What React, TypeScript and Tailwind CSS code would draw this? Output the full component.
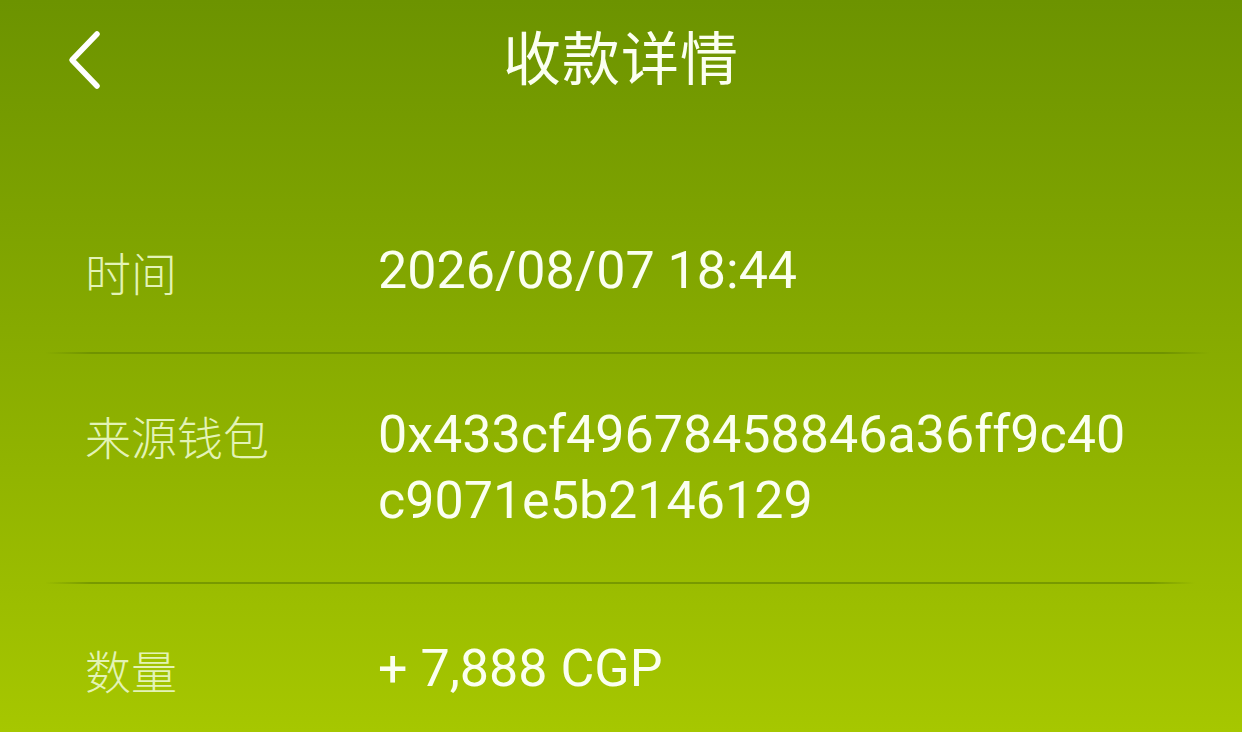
import React from "react";

const cjk = { fontFamily: '"Noto Sans CJK SC", "Noto Sans", sans-serif' };
const num = { fontFamily: 'Roboto, "Noto Sans CJK SC", sans-serif' };

function Line({ widthClass }: { widthClass: string }) {
  return (
    <div
      className={`h-[2px] ${widthClass} bg-[linear-gradient(90deg,rgba(96,130,0,0)_0%,rgba(96,130,0,0.6)_4%,rgba(96,130,0,0.6)_96%,rgba(96,130,0,0)_100%)]`}
    />
  );
}

function Row({ label, children, extraTop }: { label: string; children: React.ReactNode; extraTop?: boolean }) {
  return (
    <div className={`flex pb-[48px] pl-[40px] ${extraTop ? "pt-[52px]" : "pt-[48px]"}`}>
      <div
        className="w-[293px] shrink-0 text-[46px] leading-[66px] font-light text-[#e3f3b6]"
        style={cjk}
      >
        {label}
      </div>
      <div className="text-[52px] leading-[66px] font-normal text-[#fbfff0]" style={num}>
        {children}
      </div>
    </div>
  );
}

export default function App() {
  return (
    <div className="w-[1242px] h-[732px] overflow-hidden bg-[linear-gradient(180deg,#6c9300_0%,#86aa00_45%,#a6c700_100%)]">
      <div className="relative h-[120px] flex items-start justify-center pt-[25px]">
        <button className="absolute left-[64px] top-[30px] w-[40px] h-[60px] flex items-center justify-center">
          <svg width="40" height="60" viewBox="0 0 40 60" fill="none">
            <path
              d="M33 4 L8 30 L33 56"
              stroke="#ffffff"
              strokeWidth="5.5"
              strokeLinecap="round"
              strokeLinejoin="round"
            />
          </svg>
        </button>
        <div className="text-[58px] leading-[60px] text-[#fbfff0] tracking-[1px]" style={cjk}>
          收款详情
        </div>
      </div>
      <div className="pt-[70px] pl-[45px]">
        <Row label="时间">2026/08/07 18:44</Row>
        <Line widthClass="w-[1165px]" />
        <Row label="来源钱包">
          <div>0x433cf49678458846a36ff9c40</div>
          <div>c9071e5b2146129</div>
        </Row>
        <Line widthClass="w-[1150px]" />
        <Row label="数量" extraTop>
          + 7,888 CGP
        </Row>
      </div>
    </div>
  );
}
